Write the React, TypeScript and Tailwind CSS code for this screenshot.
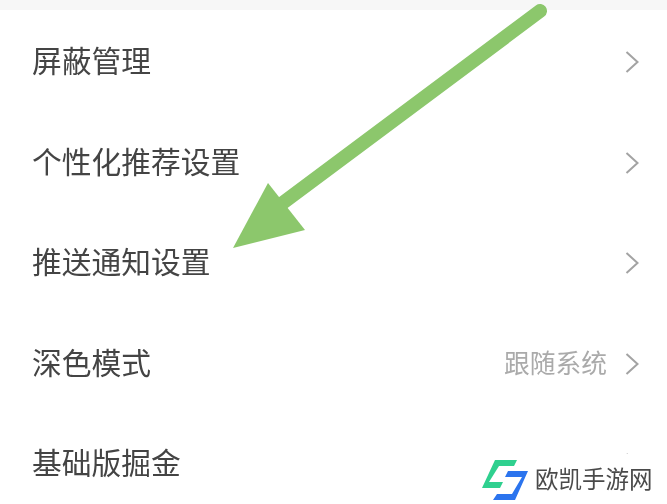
import React from 'react';

const rows = [
    { label: '屏蔽管理' },
    { label: '个性化推荐设置' },
    { label: '推送通知设置' },
    { label: '深色模式', value: '跟随系统' },
    { label: '基础版掘金' },
];

function Chevron() {
    return (
        <svg width="16" height="24" viewBox="0 0 16 24" fill="none" className="shrink-0">
            <path d="M2.5 2 L13.5 12 L2.5 22" stroke="#a3a3a3" strokeWidth="2" />
        </svg>
    );
}

export default function App() {
    return (
        <div className="relative h-[504px] w-[667px] overflow-hidden bg-white font-['Noto_Sans_CJK_SC',sans-serif]">
            <div className="h-[504px] blur-[0.6px]">
                <div className="h-[10px] bg-[#f7f7f7]" />

                {/* Settings list */}
                <div className="pt-[2px]">
                    {rows.map((row) => (
                        <div key={row.label} className="flex h-[100.5px] items-center justify-between pl-[32px] pr-[27px]">
                            <span className="mb-[4px] text-[29.75px] leading-none text-[#444444]">{row.label}</span>
                            <div className="flex items-center gap-[17px]">
                                {row.value && <span className="mb-[3px] text-[25.75px] leading-none text-[#aaaaaa]">{row.value}</span>}
                                <Chevron />
                            </div>
                        </div>
                    ))}
                </div>

                {/* Green arrow */}
                <svg className="absolute left-0 top-0" width="667" height="504" viewBox="0 0 667 504" fill="none">
                    <path d="M540 11 L280 205" stroke="#8cc76c" strokeWidth="14" strokeLinecap="round" />
                    <path d="M233 248 L268 183 L305 230 Z" fill="#8cc76c" />
                </svg>

                {/* Watermark */}
                <div className="absolute bottom-0 right-0 flex h-[50px] w-[202px] items-center gap-[6px] bg-white pl-[17px]">
                    <svg width="47" height="40" viewBox="0 0 47 40" fill="none" className="mt-[1px] shrink-0">
                        <path d="M13 0 H35 L32 6 H17 L7 22 H21 L18 28 H0 Z" fill="#2fd08f" />
                        <path d="M26 11 H46 L33 40 H11 L15 34 H30 L40 17 H23 Z" fill="#2b74ee" />
                    </svg>
                    <span className="text-[23.5px] leading-none text-[#4a4a4a]">欧凯手游网</span>
                </div>
            </div>
        </div>
    );
}
